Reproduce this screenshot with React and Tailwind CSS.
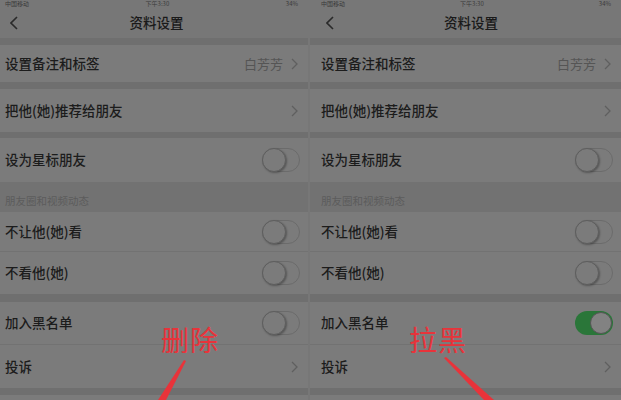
import React from 'react';

const font = { fontFamily: '"Noto Sans CJK SC", "Noto Sans", sans-serif' };

const Chevron = () => (
    <svg width="7" height="12" viewBox="0 0 7 12" className="ml-2">
        <path d="M1 1l5 5-5 5" fill="none" stroke="#5f5f5f" strokeWidth="1.3" />
    </svg>
);

const Toggle = ({ on }) =>
    on ? (
        <div className="w-[38px] h-[24px] rounded-full bg-[#2a7639] flex items-center justify-end p-[1px]">
            <div className="w-[22px] h-[22px] rounded-full bg-[#828282] border border-[#555]" />
        </div>
    ) : (
        <div className="w-[38px] h-[24px] rounded-full border border-[#6b6b6b] flex items-center">
            <div className="w-[24px] h-[24px] -ml-px rounded-full bg-[#7b7b7b] border border-[#5e5e5e] shadow-[1px_1px_2px_rgba(0,0,0,0.3)]" />
        </div>
    );

const Row = ({ h, label, right, pl, pr, divider }) => (
    <div
        className={`flex items-center justify-between bg-[#7b7b7b] ${divider ? 'border-b border-[#727272]' : ''}`}
        style={{ height: h, paddingLeft: pl, paddingRight: pr }}
    >
        <span className="text-[13.5px] font-medium text-[#1c1c1c] leading-none">{label}</span>
        {right}
    </div>
);

const Band = ({ h }) => <div className="bg-[#6f6f6f]" style={{ height: h }} />;

const Panel = ({ width, pl, pr, blocked }) => (
    <div className="flex flex-col bg-[#7b7b7b] overflow-hidden" style={{ width }}>
        <div className="h-[7px] bg-[#777] flex items-center justify-between text-[6px] text-[#3a3a3a] leading-none" style={{ paddingLeft: pl, paddingRight: pr }}>
            <span>中国移动</span>
            <span>下午3:30</span>
            <span>34%</span>
        </div>
        <div className="h-[31px] bg-[#777] flex items-center" style={{ paddingLeft: pl + 5 }}>
            <svg width="8" height="14" viewBox="0 0 8 14">
                <path d="M7 1L1 7l6 6" fill="none" stroke="#2a2a2a" strokeWidth="1.6" />
            </svg>
            <span className="flex-1 text-center text-[13.5px] font-medium text-[#1a1a1a] -ml-[13px]">资料设置</span>
        </div>
        <Band h={7} />
        <Row
            h={37}
            pl={pl}
            pr={pr}
            label="设置备注和标签"
            right={
                <div className="flex items-center text-[13px] text-[#555]">
                    白芳芳
                    <Chevron />
                </div>
            }
        />
        <Band h={7} />
        <Row h={43} pl={pl} pr={pr} label="把他(她)推荐给朋友" right={<Chevron />} />
        <Band h={6} />
        <Row h={44} pl={pl} pr={pr - 2} label="设为星标朋友" right={<Toggle />} />
        <div className="h-[30px] bg-[#727272] flex items-end pb-[6px] text-[10.5px] text-[#5c5c5c] leading-none" style={{ paddingLeft: pl }}>
            朋友圈和视频动态
        </div>
        <Row h={40} pl={pl} pr={pr - 2} label="不让他(她)看" right={<Toggle />} divider />
        <Row h={42} pl={pl} pr={pr - 2} label="不看他(她)" right={<Toggle />} />
        <Band h={8} />
        <Row h={43} pl={pl} pr={pr - 2} label="加入黑名单" right={<Toggle on={blocked} />} divider />
        <Row h={43} pl={pl} pr={pr} label="投诉" right={<Chevron />} />
        <Band h={7} />
        <div className="flex-1 bg-[#7b7b7b]" />
    </div>
);

export default function App() {
    return (
        <div className="relative w-[621px] h-[400px] overflow-hidden flex bg-[#7b7b7b]" style={font}>
            <Panel width={308} pl={5} pr={10} />
            <div className="w-[2px] bg-[#777]" />
            <Panel width={311} pl={11} pr={10} blocked />

            <span className="absolute left-[161px] top-[325px] text-[28px] text-[#e8333a] leading-none tracking-[1px]">删除</span>
            <svg className="absolute left-0 top-0" width="621" height="400">
                <polygon points="186,361 184,360 158,400 166,400" fill="#e8333a" />
                <polygon points="444,358 446,357 494,400 484,400" fill="#e8333a" />
            </svg>
            <span className="absolute left-[409px] top-[325px] text-[28px] text-[#e8333a] leading-none tracking-[1px]">拉黑</span>
        </div>
    );
}
